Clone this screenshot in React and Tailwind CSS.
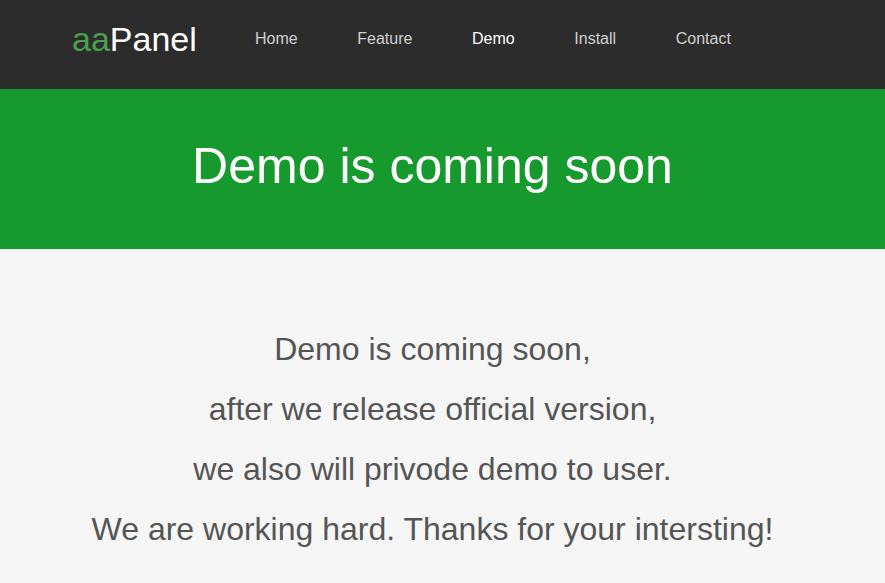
const links = ['Home', 'Feature', 'Demo', 'Install', 'Contact'];

const lines = [
  'Demo is coming soon,',
  'after we release official version,',
  'we also will privode demo to user.',
  'We are working hard. Thanks for your intersting!',
];

export default function App() {
  return (
    <div className="h-[583px] overflow-hidden bg-[#f6f6f6] font-['Liberation_Sans',Arial,sans-serif]">
      <nav className="flex h-[89px] items-center bg-[#2c2c2c] pb-3 pl-[72px]">
        <a className="w-[183px] text-[34px] leading-none text-white">
          <span className="text-[#4ca04c]">aa</span>Panel
        </a>
        <ul className="flex gap-[59.6px] text-base">
          {links.map((link) => (
            <li key={link} className={link === 'Demo' ? 'text-white' : 'text-[#d0d0d0]'}>
              {link}
            </li>
          ))}
        </ul>
      </nav>
      <header className="flex h-[160px] items-center justify-center bg-[#169a2e] pr-5 pb-[6px]">
        <h1 className="text-[50px] text-white">Demo is coming soon</h1>
      </header>
      <main className="pt-[70px] pr-5 text-center text-[32px] leading-[60px] text-[#555]">
        {lines.map((line) => (
          <p key={line}>{line}</p>
        ))}
      </main>
    </div>
  );
}
